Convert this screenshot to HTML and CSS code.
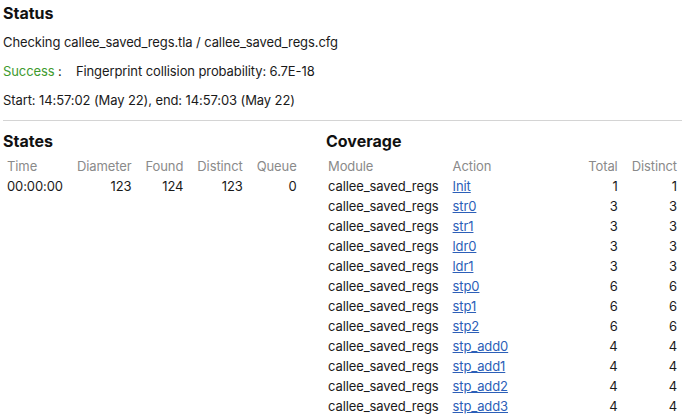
FILE: index.html
```html
<!DOCTYPE html>
<html>
<head>
<meta charset="utf-8">
<link rel="stylesheet" href="styles.css">
</head>
<body>
<section class="status">
  <h2 class="title">Status</h2>
  <p class="line">Checking callee_saved_regs.tla / callee_saved_regs.cfg</p>
  <p class="line"><span class="ok">Success</span> :&nbsp;&nbsp;&nbsp; Fingerprint collision probability: 6.7E-18</p>
  <p class="line">Start: 14:57:02 (May 22), end: 14:57:03 (May 22)</p>
</section>
<div class="rule"></div>
<div class="panels">
  <section class="states">
    <h2 class="title">States</h2>
    <table class="grid">
      <thead>
        <tr><th class="l">Time</th><th>Diameter</th><th>Found</th><th>Distinct</th><th>Queue</th></tr>
      </thead>
      <tbody>
        <tr><td class="l">00:00:00</td><td>123</td><td>124</td><td>123</td><td>0</td></tr>
      </tbody>
    </table>
  </section>
  <section class="coverage">
    <h2 class="title">Coverage</h2>
    <table class="grid wide">
      <thead>
        <tr><th class="l">Module</th><th class="l act">Action</th><th>Total</th><th>Distinct</th></tr>
      </thead>
      <tbody>
        <tr><td class="l">callee_saved_regs</td><td class="l act"><a href="#">Init</a></td><td>1</td><td>1</td></tr>
        <tr><td class="l">callee_saved_regs</td><td class="l act"><a href="#">str0</a></td><td>3</td><td>3</td></tr>
        <tr><td class="l">callee_saved_regs</td><td class="l act"><a href="#">str1</a></td><td>3</td><td>3</td></tr>
        <tr><td class="l">callee_saved_regs</td><td class="l act"><a href="#">ldr0</a></td><td>3</td><td>3</td></tr>
        <tr><td class="l">callee_saved_regs</td><td class="l act"><a href="#">ldr1</a></td><td>3</td><td>3</td></tr>
        <tr><td class="l">callee_saved_regs</td><td class="l act"><a href="#">stp0</a></td><td>6</td><td>6</td></tr>
        <tr><td class="l">callee_saved_regs</td><td class="l act"><a href="#">stp1</a></td><td>6</td><td>6</td></tr>
        <tr><td class="l">callee_saved_regs</td><td class="l act"><a href="#">stp2</a></td><td>6</td><td>6</td></tr>
        <tr><td class="l">callee_saved_regs</td><td class="l act"><a href="#">stp_add0</a></td><td>4</td><td>4</td></tr>
        <tr><td class="l">callee_saved_regs</td><td class="l act"><a href="#">stp_add1</a></td><td>4</td><td>4</td></tr>
        <tr><td class="l">callee_saved_regs</td><td class="l act"><a href="#">stp_add2</a></td><td>4</td><td>4</td></tr>
        <tr><td class="l">callee_saved_regs</td><td class="l act"><a href="#">stp_add3</a></td><td>4</td><td>4</td></tr>
      </tbody>
    </table>
  </section>
</div>
</body>
</html>
```
FILE: styles.css
```css
html, body {
  margin: 0;
  padding: 0;
  background: #ffffff;
}
body {
  font-family: Inter, "Liberation Sans", sans-serif;
  font-size: 13px;
  letter-spacing: -0.1px;
  color: #1a1a1a;
  overflow: hidden;
}
.status {
  padding: 3px 0 0 3px;
}
.title {
  margin: 0;
  font-size: 16px;
  line-height: 20px;
  font-weight: 700;
  letter-spacing: 0;
  color: #111;
}
.line {
  margin: 9px 0 0 0;
  line-height: 20px;
}
.ok {
  color: #3d9a2e;
}
.rule {
  margin: 10px 0 0 3px;
  height: 1px;
  background: #d4d4d4;
}
.panels {
  display: grid;
  grid-template-columns: 321px 1fr;
  padding-top: 10px;
}
.states .title {
  margin-left: 3px;
}
.coverage .title {
  margin-left: 5px;
}
.grid {
  border-collapse: collapse;
  margin-top: 5px;
}
.grid th, .grid td {
  padding: 0 7px;
  height: 20px;
  line-height: 20px;
  text-align: right;
  white-space: nowrap;
}
.grid th {
  font-weight: 400;
  color: #8a8a8a;
}
.grid .l {
  text-align: left;
}
.grid th:last-child, .grid td:last-child {
  padding-right: 5px;
}
.wide {
  width: 100%;
}
.wide .act {
  width: 100%;
}
a {
  color: #2c5fb8;
  text-decoration: underline;
}
```
